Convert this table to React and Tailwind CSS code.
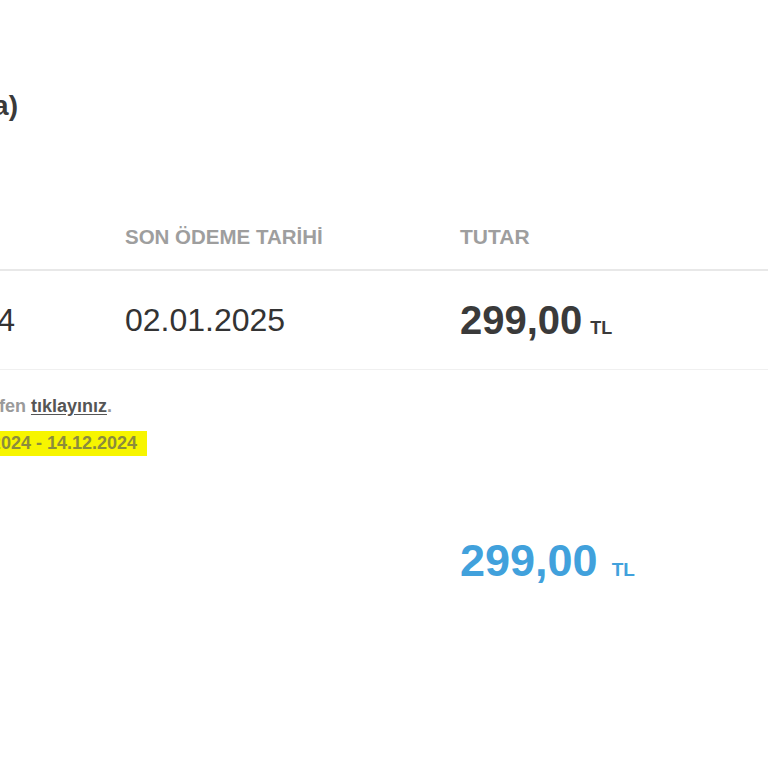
import React from "react";

const rows = [
  { period: "15.11.2024 - 14.12.2024", due: "02.01.2025", last: "14.12.2024", amount: "299,00" },
];

export default function App() {
  const bill = rows[0];

  return (
    <div className="w-[768px] h-[768px] overflow-hidden bg-white font-['Liberation_Sans',Arial,sans-serif]">
      <div className="ml-[-145px] w-[913px]">
        {/* Title */}
        <div className="pt-[88px] w-[163px] flex justify-end">
          <h1 className="whitespace-nowrap text-[28px] leading-[36px] font-bold text-[#3a3a3a]">
            Fatura Bilgileri (Kampanya)
          </h1>
        </div>

        {/* Table */}
        <div className="mt-[103px]">
          <div className="grid grid-cols-[270px_335px_1fr] pb-[22px] border-b-2 border-[#e8e8e8] text-[20.5px] leading-[20px] font-bold text-[#9e9e9e] uppercase">
            <div>Dönem</div>
            <div>SON ÖDEME TARİHİ</div>
            <div className="text-[21px]">TUTAR</div>
          </div>
          <div className="grid grid-cols-[270px_335px_1fr] h-[99px] items-center border-b border-[#f0f0f0] text-[#333]">
            <div className="text-[32px]">{bill.last}</div>
            <div className="text-[32px]">{bill.due}</div>
            <div className="flex items-baseline gap-[8px]">
              <span className="text-[40px] font-bold text-[#3a3a3a]">{bill.amount}</span>
              <span className="text-[18px] font-bold text-[#3a3a3a]">TL</span>
            </div>
          </div>
        </div>

        {/* Notes */}
        <div className="mt-[25px] w-[257px] flex justify-end">
          <p className="whitespace-nowrap text-[18px] leading-[22px] font-bold text-[#9a9a9a]">
            Faturanızın detayını görüntülemek için lütfen{" "}
            <span className="text-[#555] underline underline-offset-2">tıklayınız</span>.
          </p>
        </div>
        <div className="mt-[14px] w-[292px] flex justify-end">
          <span className="whitespace-nowrap bg-[#f7f500] h-[25px] leading-[25px] pr-[10px] pl-[6px] text-[18px] font-bold text-[#8c8c3c]">
            Fatura Dönemi: {bill.period}
          </span>
        </div>

        {/* Total */}
        <div className="mt-[80px] grid grid-cols-[270px_335px_1fr]">
          <div />
          <div />
          <div className="flex items-baseline gap-[14px] text-[#41a1dc] font-bold">
            <span className="text-[45px] leading-[50px]">{bill.amount}</span>
            <span className="text-[19px]">TL</span>
          </div>
        </div>
      </div>
    </div>
  );
}
